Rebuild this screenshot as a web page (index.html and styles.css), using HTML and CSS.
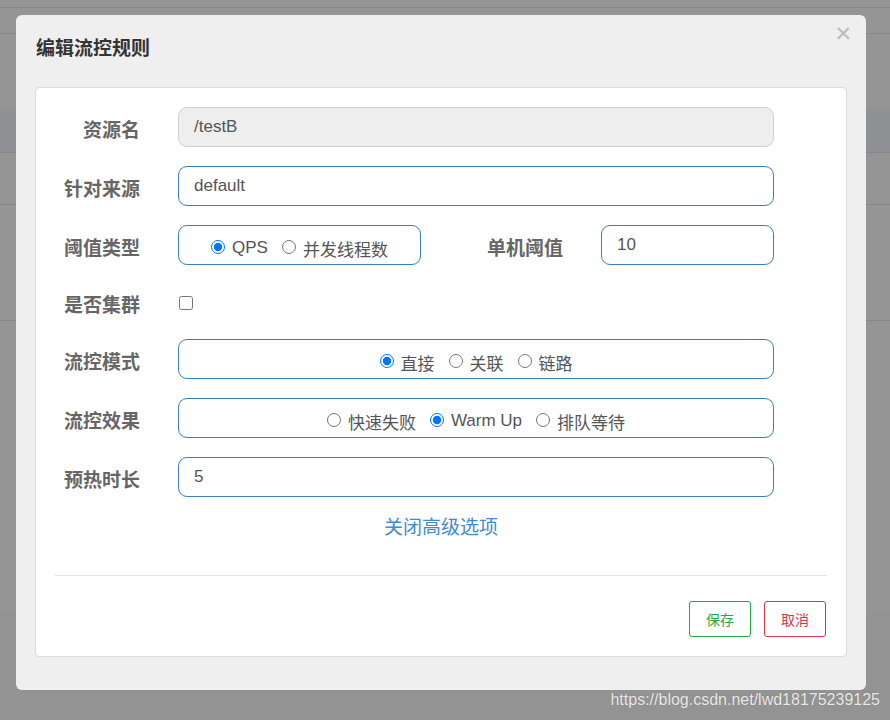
FILE: index.html
```html
<!DOCTYPE html>
<html lang="zh-CN">
<head>
<meta charset="utf-8">
<title>编辑流控规则</title>
<link rel="stylesheet" href="styles.css">
</head>
<body>
<div class="backdrop">
  <div class="bg bg1"></div>
  <div class="bg bg2"></div>
  <div class="bg bg3"></div>
  <div class="bg band"></div>
  <div class="bg bg4"></div>
  <div class="bg bg5"></div>
  <div class="bg bg6"></div>
  <div class="bg bottom"><span class="watermark">https://blog.csdn.net/lwd18175239125</span></div>
</div>

<div class="modal">
  <span class="close">&#x2715;</span>
  <h3 class="title">编辑流控规则</h3>
  <div class="panel">
    <div class="form">
      <div class="row">
        <label class="label">资源名</label>
        <div class="field disabled">/testB</div>
      </div>
      <div class="row">
        <label class="label">针对来源</label>
        <div class="field">default</div>
      </div>
      <div class="row">
        <label class="label">阈值类型</label>
        <div class="radio-box small">
          <label class="opt"><input type="radio" name="grade" checked> QPS</label>
          <label class="opt"><input type="radio" name="grade"> 并发线程数</label>
        </div>
        <label class="label label-wide">单机阈值</label>
        <div class="field short">10</div>
      </div>
      <div class="row row-check">
        <label class="label">是否集群</label>
        <input class="check" type="checkbox">
      </div>
      <div class="row">
        <label class="label">流控模式</label>
        <div class="radio-box">
          <label class="opt"><input type="radio" name="mode" checked> 直接</label>
          <label class="opt"><input type="radio" name="mode"> 关联</label>
          <label class="opt"><input type="radio" name="mode"> 链路</label>
        </div>
      </div>
      <div class="row">
        <label class="label">流控效果</label>
        <div class="radio-box">
          <label class="opt"><input type="radio" name="effect"> 快速失败</label>
          <label class="opt"><input type="radio" name="effect" checked> Warm Up</label>
          <label class="opt"><input type="radio" name="effect"> 排队等待</label>
        </div>
      </div>
      <div class="row">
        <label class="label">预热时长</label>
        <div class="field">5</div>
      </div>
    </div>
    <div class="toggle"><a class="link">关闭高级选项</a></div>
    <div class="divider"></div>
    <div class="footer">
      <button class="btn btn-save">保存</button>
      <button class="btn btn-cancel">取消</button>
    </div>
  </div>
</div>
</body>
</html>
```

FILE: styles.css
```css
* { box-sizing: border-box; }
html, body { margin: 0; padding: 0; }
body {
  width: 890px;
  height: 720px;
  overflow: hidden;
  background: #959595;
  font-family: "Liberation Sans", "Noto Sans CJK SC", sans-serif;
  position: relative;
}

.backdrop { display: flex; flex-direction: column; height: 720px; }
.bg { border-bottom: 1px solid #878787; }
.bg1 { height: 8px; background: #969696; }
.bg2 { height: 26px; background: #959595; }
.bg3 { height: 75px; background: #959595; border-bottom: none; }
.band { height: 44px; background: #8f9194; }
.bg4 { height: 52px; background: #959595; }
.bg5 { height: 116px; background: #959595; }
.bg6 { height: 292px; background: #959595; border-bottom: none; }
.bottom {
  flex: 1;
  background: #939393;
  border-bottom: none;
  display: flex;
  justify-content: flex-end;
  align-items: flex-end;
  padding: 0 10px 10px 0;
}
.watermark {
  color: #eaeaea;
  font-size: 16px;
  line-height: 20px;
  text-shadow: 0 0 1px rgba(0,0,0,0.25);
}

.modal {
  position: absolute;
  left: 16px;
  top: 15px;
  width: 850px;
  height: 675px;
  background: #efefef;
  border-radius: 6px;
  padding: 20px 19px 33px 19px;
}
.close {
  position: absolute;
  right: 14px;
  top: 7px;
  font-size: 21px;
  font-weight: bold;
  color: #bdbdbd;
  font-family: "DejaVu Sans", sans-serif;
}
.title {
  margin: 0 0 0 1px;
  height: 52px;
  font-size: 19px;
  line-height: 28px;
  font-weight: bold;
  color: #333;
}

.panel {
  background: #fff;
  border: 1px solid #dcdcdc;
  border-radius: 4px;
  height: 570px;
  padding: 19px 19px 19px 19px;
  display: flex;
  flex-direction: column;
}

.form { display: flex; flex-direction: column; gap: 19px; }
.row { display: flex; align-items: center; height: 40px; }
.row-check { height: 36px; }
.label {
  width: 85px;
  text-align: right;
  margin-right: 38px;
  font-size: 19px;
  font-weight: bold;
  color: #666;
  padding-top: 3px;
  flex-shrink: 0;
  white-space: nowrap;
}
.label-wide { width: 142px; }

.field {
  width: 596px;
  height: 40px;
  border: 1px solid #3a7ebf;
  border-radius: 9px;
  padding: 0 15px;
  font-size: 17px;
  line-height: 38px;
  color: #555;
}
.field.disabled { background: #eee; border-color: #cfcfcf; }
.field.short { width: 173px; }

.radio-box {
  width: 596px;
  height: 40px;
  border: 1px solid #3a7ebf;
  border-radius: 9px;
  display: flex;
  justify-content: center;
  align-items: center;
  gap: 14px;
  padding-top: 6px;
  font-size: 17px;
  color: #555;
}
.radio-box.small { width: 243px; }
.opt { display: flex; align-items: center; gap: 4px; white-space: nowrap; }
.opt input { margin: 0 3px 0 0; width: 14px; height: 14px; position: relative; top: -1px; }

.check { margin: 0 0 0 1px; width: 14px; height: 14px; position: relative; top: 1px; }

.toggle {
  text-align: center;
  margin-top: 19px;
  height: 24px;
}
.link {
  font-size: 19px;
  line-height: 24px;
  color: #428bca;
  cursor: pointer;
}
.divider {
  margin-top: 35px;
  border-top: 1px solid #e3e3e3;
}
.footer {
  display: flex;
  justify-content: flex-end;
  gap: 13px;
  margin-top: 25px;
  padding-right: 1px;
}
.btn {
  width: 62px;
  height: 36px;
  background: #fff;
  border: 1px solid;
  border-radius: 3px;
  font-size: 14px;
  font-family: "Liberation Sans", "Noto Sans CJK SC", sans-serif;
  padding: 0;
}
.btn-save { color: #28a745; border-color: #28a745; }
.btn-cancel { color: #dc3545; border-color: #dc3545; }
```
